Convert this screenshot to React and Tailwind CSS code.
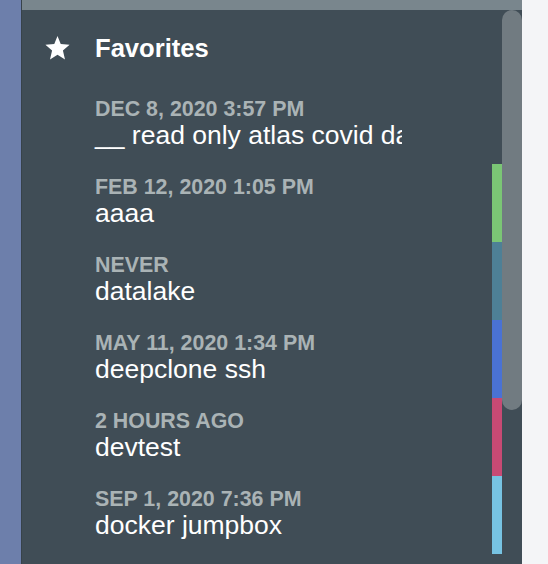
import React from "react";

const favorites = [
    { when: "Dec 8, 2020 3:57 PM", name: "__ read only atlas covid data", color: null },
    { when: "Feb 12, 2020 1:05 PM", name: "aaaa", color: "bg-[#7bc675]" },
    { when: "Never", name: "datalake", color: "bg-[#4e8096]" },
    { when: "May 11, 2020 1:34 PM", name: "deepclone ssh", color: "bg-[#4a72d4]" },
    { when: "2 hours ago", name: "devtest", color: "bg-[#c84a74]" },
    { when: "Sep 1, 2020 7:36 PM", name: "docker jumpbox", color: "bg-[#77c3e2]" },
];

const StarIcon = () => (
    <svg viewBox="0 0 24 23" className="w-[25px] h-[24px]" fill="white">
        <polygon points="12,0 15.1,7.7 23.6,8.4 17.2,13.9 19.2,22.6 12,18 4.8,22.6 6.8,13.9 0.4,8.4 8.9,7.7" />
    </svg>
);

const FavoriteRow = ({ item }) => (
    <div className="flex h-[78px]">
        <div className="pl-[73px] pt-[11px] w-[380px] overflow-hidden whitespace-nowrap">
            <div className="text-[21.4px] leading-[24px] font-bold uppercase text-[#aab3b5]">
                {item.when}
            </div>
            <div className="text-[26.5px] leading-[28px] text-white">{item.name}</div>
        </div>
        {item.color && <div className={`ml-auto w-[10px] ${item.color}`} />}
    </div>
);

export default function App() {
    return (
        <div
            className="flex h-[564px] w-[548px] overflow-hidden bg-[#f4f5f7]"
            style={{ fontFamily: '"Liberation Sans", Arial, sans-serif' }}
        >
            {/* left edge */}
            <div className="w-[21px] bg-[#6d7fab] border-r border-[#37424a] box-content" />

            {/* panel */}
            <div className="flex w-[500px] flex-col bg-[#404d56]">
                <div className="h-[10px] bg-[#79868d]" />
                <div className="flex flex-1 overflow-hidden">
                    <div className="flex-1">
                        {/* Header */}
                        <div className="flex items-center pl-[23px] pt-[22px] pb-[22px]">
                            <StarIcon />
                            <h1 className="ml-[25px] text-[25.6px] leading-[32px] font-bold text-white">Favorites</h1>
                        </div>
                        {favorites.map((item) => (
                            <FavoriteRow key={item.name} item={item} />
                        ))}
                    </div>
                    {/* scrollbar */}
                    <div className="w-[20px]">
                        <div className="h-[400px] rounded-full bg-[#717b81]" />
                    </div>
                </div>
            </div>
        </div>
    );
}
